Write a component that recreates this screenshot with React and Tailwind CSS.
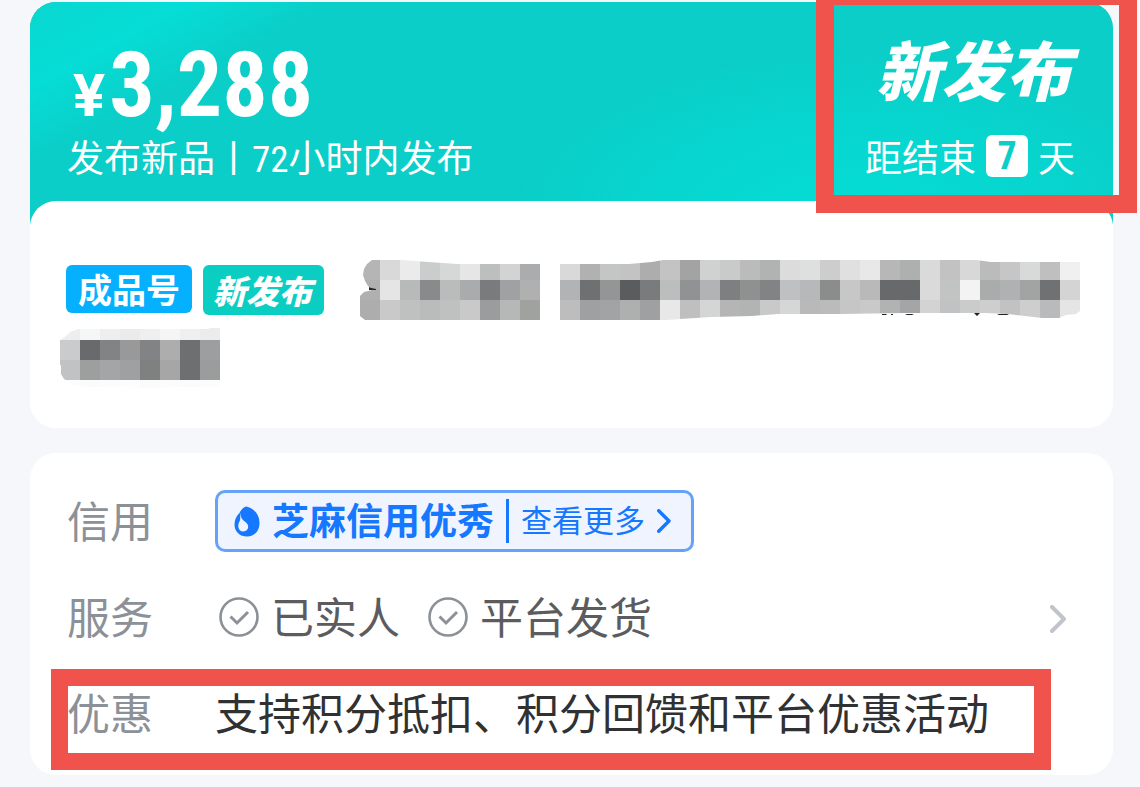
const TITLE_ROWS = [
  "b5b5b5 d9d9d9 ebebeb cbcdcc d6d8d7 e6e6e6 bcbfbe d3d3d3 abacae - d9d9d9 b1b1b1 c3c6c4 c3c3c3 adadad c3c3c3 a3a3a3 cfd2d1 c9cbca bbbbbb b0b3b1 dcdcdc dee0df cdcdcd e0e0e0 e8e8e8 b7b7b7 adb0ae dadada c2c2c2 d8d8d8 bbbbbb c6c6c6 d7dad8 bfbfbf f0f0f0",
  "b0b0b0 e5e5e5 b7bab8 898a8c bbbbbb aaabad 7a7b7d a0a1a3 b0b0b0 - b1b3b5 6f7072 939694 5b5c5d 7a7b7d bbbebc 919294 b1b3b5 7e7f81 8e918f 828385 bfc0c2 b7b8ba 8a8d8b c7c7c7 b9b9b9 68696a 68696a dadada c1c4c2 f3f3f3 a9acaa b0b1b3 a1a4a2 707173 d4d4d4",
  "adadad c9c9c9 bec1bf b9bcba bec1c0 c9c9c9 9b9c9e b5b8b6 a0a2a0 - bdbdbd 9fa0a2 a2a3a5 adb0ae 9fa0a2 e8e8e8 bfbfbf d3d6d4 b5b5b5 b1b4b2 c9c9c9 d4d7d5 b9b9b9 bbbbbb c6c6c6 c9c9c9 b0b3b1 a4a5a7 d3d3d3 c1c2c4 cacccb cecece c2c2c2 cecece b9babc e5e5e5",
];

const TAIL_ROWS = [
  "eeeeee f5f7f6 eeeeee ebebeb efefef f5f5f5 efefef ececec",
  "cacbcd 696a6b 828385 999999 828385 adadad 6e6f71 9d9ea0",
  "c1c2c4 9c9f9d a4a5a7 9fa0a2 7e817f a6a6a6 6e6f71 9a9d9b",
  "fcfcfc fbfbfb fcfcfc fdfdfd fbfbfb fcfcfc fbfbfb fcfcfc",
];

function Cells({ rows }) {
  return rows.map((row, y) =>
    row.split(" ").map((c, x) =>
      c === "-" ? null : (
        <rect key={`${x}-${y}`} x={x * 20} y={y * 20} width="20" height="20" fill={`#${c}`} shapeRendering="crispEdges" />
      )
    )
  );
}

function TitleMosaic() {
  return (
    <svg viewBox="0 0 720 60" className="w-[720px] max-w-full" aria-hidden="true">
      <clipPath id="title-edge">
        <path d="M12 0H42L68 2L98 4H200L269 4L292 2L303 0H616L631 2H720V51L716 54L706 55L699 58H682L665 56L648 54L625 53H545L480 54H418L392 56L352 57L320 59L307 60H5L0 56V36L4 32L12 30L8 26L5 21L3 15L4 9L7 4Z" />
      </clipPath>
      <g clipPath="url(#title-edge)">
        <Cells rows={TITLE_ROWS} />
      </g>
      <path d="M9 27L11 28L16 29V30H9ZM522 54H527L526 55H522ZM531 54H533V55H531ZM545 54H554L552 55H547ZM614 53H620L617 56ZM637 54H649L647 55H639Z" fill="#222" />
    </svg>
  );
}

function TailMosaic() {
  return (
    <svg viewBox="0 0 160 60" className="w-40" aria-hidden="true">
      <clipPath id="tail-edge">
        <path d="M0 20L5 17L10 12L18 9H148L150 8H160V67H108L100 68H80L60 67H25L12 64L4 59L1 54V46L0 44Z" />
      </clipPath>
      <g transform="translate(0 -8)" clipPath="url(#tail-edge)">
        <Cells rows={TAIL_ROWS} />
      </g>
    </svg>
  );
}

function Chevron({ className }) {
  return (
    <svg viewBox="0 0 16 28" className={className} fill="none" stroke="currentColor" strokeWidth="4" strokeLinecap="round" strokeLinejoin="round" aria-hidden="true">
      <path d="M2 2L14 14L2 26" />
    </svg>
  );
}

function Drop() {
  return (
    <svg viewBox="0 0 26 31" className="w-[26px]" aria-hidden="true">
      <path d="M12 .5C19 1.5 25.5 8 25.5 17C25.5 25 20.5 30.5 13 30.5C6 30.5 .5 26 .5 18.5C.5 13.5 2.5 10 5.5 7C7 4 9.500 1 12 .5Z" fill="#1677ff" />
      <path d="M7 6.500C6 12 9 14 12 16.500C16.500 20.500 13.500 25.500 9 25.500C4.500 25.500 3 19.500 5.500 15.500C7 13 5.500 10 7 6.500Z" fill="#eff4fe" />
    </svg>
  );
}

function Service({ children }) {
  return (
    <span className="flex items-center gap-3 text-[#5c5c5f]">
      <svg viewBox="0 0 40 40" className="w-10" fill="none" stroke="#8c9097" aria-hidden="true">
        <circle cx="20" cy="20" r="18.5" strokeWidth="2.6" />
        <path d="M11.500 19.500L18 26L29 15" strokeWidth="3" />
      </svg>
      <span className="pb-1">{children}</span>
    </span>
  );
}

function Row({ label, children }) {
  return (
    <div className="flex h-16 items-center">
      <dt className="w-[148px] shrink-0 pb-1 text-[#8c9097]">{label}</dt>
      <dd className="flex flex-1 items-center">{children}</dd>
    </div>
  );
}

export default function App() {
  return (
    <main className="min-h-screen overflow-hidden bg-[#f5f7fb] pt-0.5 pr-[27px] pb-3 pl-[30px] font-['Noto_Sans_CJK_SC',sans-serif]">
      <section className="relative rounded-[26px] bg-[linear-gradient(to_bottom,#0bcec8_222px,white_222px)]">
        <header className="flex h-[199px] justify-between rounded-t-[26px] bg-[linear-gradient(152deg,#0ad7d0_0%,#05ddd6_11%,#09d4cd_17%,transparent_21%),radial-gradient(ellipse_340px_170px_at_76%_110%,#04ddd5_0%,#07d6cf_55%,transparent_100%)] pt-11 pr-[38px] pl-[37px] text-white">
          <div>
            <p className="flex items-baseline gap-1 pl-1.5 font-['Roboto_Condensed',Roboto,sans-serif] leading-[80px] font-bold">
              <span className="font-[Roboto,sans-serif] text-[60px]">¥</span>
              <span className="text-[90px]">3,288</span>
            </p>
            <p className="-mt-3 text-[37px] leading-[64px]">
              发布新品丨<span className="font-['Roboto_Condensed',Roboto,sans-serif]">72</span>小时内发布
            </p>
          </div>
          <div className="-mt-2.5 flex flex-col items-end">
            <strong className="pr-1 text-[65px] leading-[64px] font-black italic">新发布</strong>
            <p className="mt-6 flex items-center gap-2.5 text-[37px] leading-[64px]">
              距结束
              <b className="flex size-[42px] items-center justify-center rounded-md bg-white font-['Roboto_Condensed',Roboto,sans-serif] text-[38px] text-[#0bcec8]">7</b>
              天
            </p>
          </div>
        </header>
        <h1 className="flex min-h-[227px] flex-wrap content-start items-start rounded-[26px] bg-white px-[30px] pt-[59px]">
          <span className="mt-[5px] ml-1.5 rounded-md bg-[#05b0ff] px-3 text-[34px] leading-[48px] font-bold text-white">成品号</span>
          <span className="mt-[5px] mr-9 ml-[11px] rounded-md bg-[#0bcec3] pr-3 pl-2.5 text-[33px] leading-[50px] font-black text-white italic">新发布</span>
          <TitleMosaic />
          <div className="mt-2 w-full">
            <TailMosaic />
          </div>
        </h1>
        <div className="pointer-events-none absolute -top-[15px] -right-6 h-[226px] w-[321px] border-[18px] border-[#f0534b]" />
      </section>

      <section className="relative mt-[25px] rounded-[26px] bg-white px-[37px] pt-9 pb-[30px]">
        <dl className="flex flex-col gap-8 text-[43px] leading-[60px]">
          <Row label="信用">
            <a href="#credit" className="flex h-[62px] items-center rounded-[10px] border-[3px] border-[#66a3f8] bg-[#eff4fe] px-4 text-[#1677ff]">
              <Drop />
              <strong className="ml-3 pb-1 text-[37px] font-bold">芝麻信用优秀</strong>
              <span className="mx-3 h-11 w-[3px] bg-[#1677ff]" />
              <span className="pb-1 text-[31px]">查看更多</span>
              <Chevron className="mr-1 ml-3 h-6" />
            </a>
          </Row>
          <Row label="服务">
            <button className="flex flex-1 items-center gap-7 pl-1 text-left">
              <Service>已实人</Service>
              <Service>平台发货</Service>
              <Chevron className="mt-1 mr-2.5 ml-auto h-7 text-[#c0c4cb]" />
            </button>
          </Row>
          <Row label="优惠">
            <span className="pb-1 text-[#303133]">支持积分抵扣、积分回馈和平台优惠活动</span>
          </Row>
        </dl>
        <div className="pointer-events-none absolute right-[62px] bottom-[5px] left-[21px] h-[101px] border-[17px] border-[#f0534b]" />
      </section>
    </main>
  );
}
